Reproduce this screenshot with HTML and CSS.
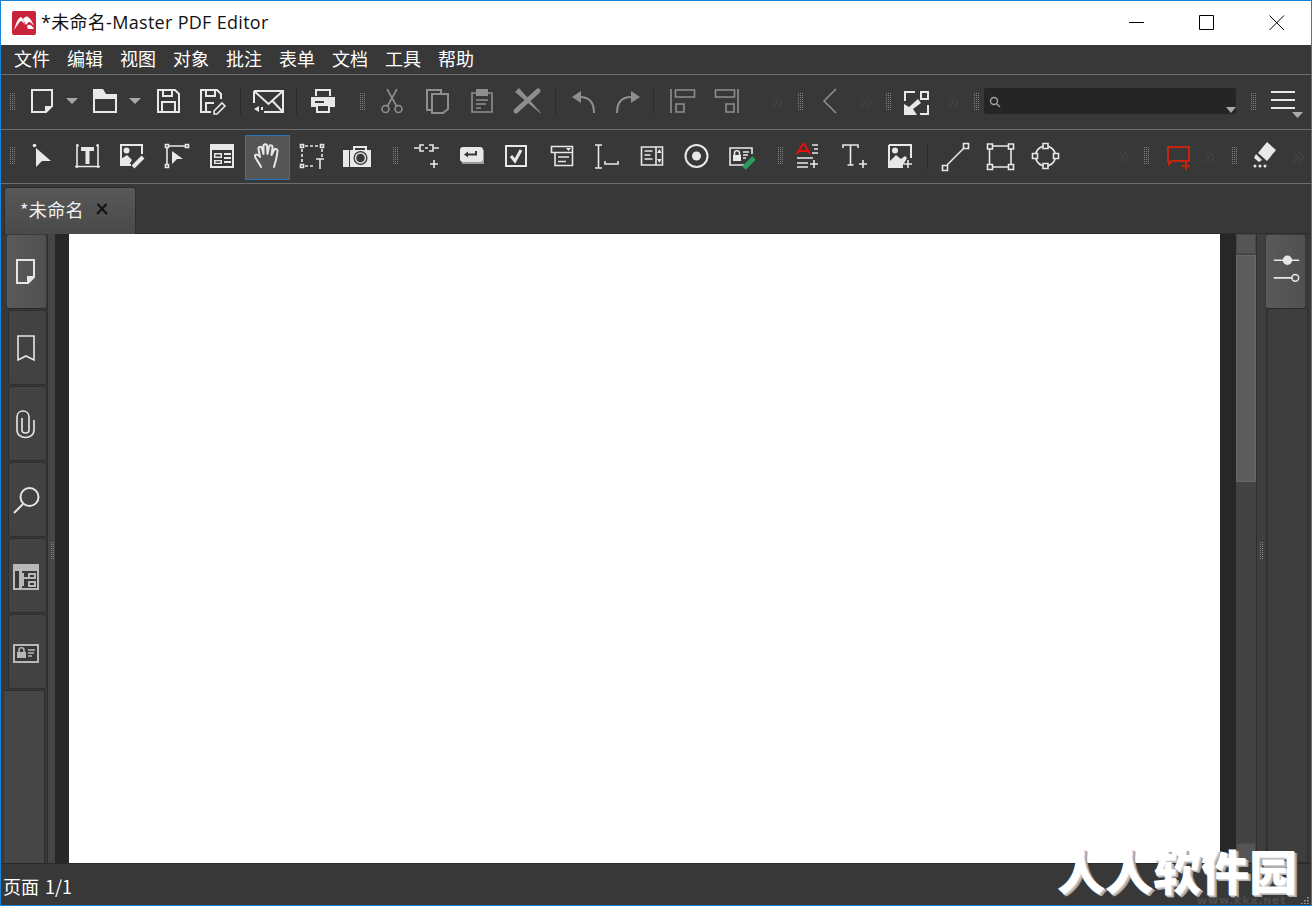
FILE: index.html
```html
<!DOCTYPE html>
<html lang="zh-CN">
<head>
    <meta charset="UTF-8">
    <meta name="viewport" content="width=device-width, initial-scale=1.0">
    <title>*未命名-Master PDF Editor</title>
    <link rel="stylesheet" href="styles.css">
</head>
<body>
<div class="window">

    <div class="titlebar">
        <svg class="logo" viewBox="0 0 24 24">
            <rect width="24" height="24" rx="2" fill="#c9243a"/>
            <path class="logo-mark" d="M2 19C4 12 6 7 9 6c2 1 3 5 4 8-2-3-3-4-4-4-2 1-4 5-7 9zM11 8c2-2 3-3 5-2 2 1 4 4 6 9-2-2-3-4-5-4-1 0-2 2-3 3-1-2-2-4-3-6zM15 15c2-2 4-2 7 3H16z"/>
        </svg>
        <span class="title-text">*未命名-Master PDF Editor</span>
        <div class="winbtns">
            <svg class="winbtn" viewBox="0 0 16 16"><path d="M0 7.500h15"/></svg>
            <svg class="winbtn" viewBox="0 0 16 16"><path d="M.5.5h14v14H.5z"/></svg>
            <svg class="winbtn" viewBox="0 0 16 16"><path d="M.5.5l14.500 14.500M15 .5L.5 15"/></svg>
        </div>
    </div>

    <div class="menu">
        <span>文件</span><span>编辑</span><span>视图</span><span>对象</span><span>批注</span><span>表单</span><span>文档</span><span>工具</span><span>帮助</span>
    </div>

    <div class="toolbar tb1">
        <i class="grip"></i>
        <div class="tool ml5"><svg class="ic" viewBox="0 0 31 31"><path d="M5 4h20v16l-6 6H5z"/><path class="f" d="M25 20h-7v7z"/></svg></div>
        <div class="tool w14"><svg class="caret" viewBox="0 0 14 31"><path d="M1 12h12l-6 6z"/></svg></div>
        <div class="tool w49"><svg class="ic" viewBox="0 0 31 31"><path d="M6 12h22v14H6z"/><path class="f" d="M5 3h10l3 5h11v4H5z"/></svg></div>
        <div class="tool w14"><svg class="caret" viewBox="0 0 14 31"><path d="M1 12h12l-6 6z"/></svg></div>
        <div class="tool ml3"><svg class="ic" viewBox="0 0 31 31"><path d="M6 4h17l4 4v18H6z"/><path d="M11 4v6h9V4M10 26V16h13v10"/></svg></div>
        <div class="tool"><svg class="ic" viewBox="0 0 31 31"><path d="M14 26H4V4h16l4 4v5"/><path d="M9 4v6h9V4M9 26V17h8"/><path class="thin" d="M17 25l8-8 3 3-8 8h-3z"/></svg></div>
        <div class="sep w11"></div>
        <div class="tool"><svg class="ic mail" viewBox="0 0 31 31"><path d="M1 5h29v21H11M1 5v12M1 5l14.500 13L30 5M19.500 15L30 26"/><path class="f" d="M1 23l5-3v6zM8 21h2v3H8z"/></svg></div>
        <div class="sep w11"></div>
        <div class="tool w43"><svg class="ic" viewBox="0 0 31 31"><path d="M8 10V4h14v6"/><path class="f" d="M3 11h24v10H3z"/><path class="hole" d="M7 15h9v2H7z"/><path d="M9 19h12v7H9z" fill="#383838"/></svg></div>
        <i class="grip ml15"></i>
        <div class="tool ml5 off"><svg class="ic thin" viewBox="0 0 31 31"><circle cx="8.500" cy="23" r="3.500"/><circle cx="21.500" cy="23" r="3.500"/><path d="M10.500 20L20 3M19.500 20L10 3"/></svg></div>
        <div class="tool off"><svg class="ic" viewBox="0 0 31 31"><path d="M9 24H5V4h14v4"/><path d="M10 8h16v15l-5 4H10z"/></svg></div>
        <div class="tool off"><svg class="ic thin" viewBox="0 0 31 31"><path d="M5 7h20v19H5z"/><path class="f" d="M9 3h12v7H9z"/><path d="M9 14h12M9 18h10M9 22h5"/></svg></div>
        <div class="tool off"><svg class="ic" viewBox="0 0 31 31"><path class="fat" d="M26 5L4 25"/><path class="f" d="M3 6l4-4 22 25h-1z"/></svg></div>
        <div class="sep w11"></div>
        <div class="tool off"><svg class="ic" viewBox="0 0 31 31"><path class="f" d="M4 11l9-6v12z"/><path d="M12 11c7 0 14 3 14 16"/></svg></div>
        <div class="tool off"><svg class="ic" viewBox="0 0 31 31"><path class="f" d="M27 11l-9-6v12z"/><path d="M4 27c0-13 7-16 14-16"/></svg></div>
        <div class="sep w5"></div>
        <div class="tool ml3 off"><svg class="ic thin" viewBox="0 0 31 31"><path d="M5 3v24"/><path d="M9.500 4h19v7h-19zM10 18h8v8h-8z"/></svg></div>
        <div class="tool off"><svg class="ic thin" viewBox="0 0 31 31"><path d="M27 3v24"/><path d="M4.500 4h19v7h-19zM15 18h8v8h-8z"/></svg></div>
        <div class="tool more ml18"><svg class="ic chev" viewBox="0 0 31 31"><path d="M10.500 11l5 5-5 5M15.500 11l5 5-5 5"/></svg></div>
        <i class="grip ml10"></i>
        <div class="tool w55 off"><svg class="ic thin" viewBox="0 0 31 31"><path d="M21 3L9 15l12 12"/></svg></div>
        <div class="tool w17"><svg class="ic chev" viewBox="0 0 31 31"><path d="M10.500 11l5 5-5 5M15.500 11l5 5-5 5"/></svg></div>
        <i class="grip ml11"></i>
        <div class="tool w51"><svg class="ic" viewBox="0 0 31 31"><path d="M4 15V6h10M19 28h8v-9"/><path d="M20 6h7v7h-7z"/><path class="f" d="M3 29V18l5 3 9-8 3 4-8 6 4 6z"/></svg></div>
        <div class="tool more ml1"><svg class="ic chev" viewBox="0 0 31 31"><path d="M10.500 11l5 5-5 5M15.500 11l5 5-5 5"/></svg></div>
        <i class="grip ml10"></i>
        <div class="search ml5">
            <svg class="search-ic" viewBox="0 0 12 12"><circle cx="5" cy="5" r="3.500"/><path d="M7.500 7.500l3.500 3.500"/></svg>
            <svg class="search-caret" viewBox="0 0 10 6"><path d="M0 0h10L5 6z"/></svg>
        </div>
        <i class="grip ml15"></i>
        <div class="tool w55"><svg class="ic lines" viewBox="0 0 31 31"><path d="M3 6h24M3 14h24M3 22h24"/><path class="f caret-f" d="M24 26h11l-5.500 6z"/></svg></div>
    </div>

    <div class="toolbar tb2">
        <i class="grip"></i>
        <div class="tool ml5"><svg class="ic" viewBox="0 0 31 31"><circle class="f" cx="7.500" cy="4.500" r="1.800"/><path class="f" d="M9 7l15 13h-9l-6 6z"/></svg></div>
        <div class="tool"><svg class="ic" viewBox="0 0 31 31"><path class="thin" d="M5 3v24M26 3v24M3 25.500h25"/><path class="thin" d="M5 4.500h2M24 4.500h2"/><path class="f" d="M9 6h13v4h-4.500v13h-4V10H9z"/></svg></div>
        <div class="tool"><svg class="ic" viewBox="0 0 31 31"><path d="M14 24H4V4h21v9"/><circle class="f" cx="9.500" cy="9.500" r="3"/><path class="f" d="M4 24v-6l6-4 5 5-3 5z"/><path class="fat thinner" d="M16 26l10-10"/></svg></div>
        <div class="tool"><svg class="ic" viewBox="0 0 31 31"><path class="thin" d="M7 5h16M5 7v16"/><path class="thin" d="M3.500 3.500h3v3h-3zM23.500 3.500h3v3h-3zM3.500 23.500h3v3h-3z"/><path class="f" d="M10 10l11 8h-6l-5 5z"/></svg></div>
        <div class="tool"><svg class="ic" viewBox="0 0 31 31"><path class="f" d="M3 3h24v24H3z"/><path class="hole" d="M5 9h20v16H5z"/><path class="f" d="M7 12h8v5H7zM7 19h8v4H7zM17 12h7v2h-7zM17 16h7v2h-7zM17 20h7v2h-7z"/><path class="hole" d="M8.500 13.500h5v2h-5zM8.500 20.200h5v1.600h-5z"/></svg></div>
        <div class="tool hand-active"><svg class="ic round" viewBox="0 0 31 31"><path d="M10 26C8 21 4 18 4 15c0-2 3-2 5 1L7.500 8c-.5-2.500 3-3 3.500-.5L12.500 13V5c0-2.500 3.500-2.500 3.500 0l.5 8L18 6c.5-2.500 4-2 3.500.5L20.500 14 23 9c1-2 4-1 3.500 1.500C26 15 25 20 23 26"/></svg></div>
        <div class="tool"><svg class="ic thin" viewBox="0 0 31 31"><path class="dash" d="M8 5h15M5 8v15M8 25h9M25 8v8"/><path d="M3.500 3.500h3v3h-3zM23.500 3.500h3v3h-3zM3.500 23.500h3v3h-3z"/><path d="M19 18h8M23 18v10"/></svg></div>
        <div class="tool"><svg class="ic" viewBox="0 0 31 31"><path class="f" d="M1 9h6v17H1zM8 9h3V5h14v4h4v17H8z"/><path class="hole" d="M13 7h10v2H13z"/><circle class="hole" cx="18.500" cy="17" r="7"/><circle class="ring" cx="18.500" cy="17" r="5"/></svg></div>
        <i class="grip ml13"></i>
        <div class="tool ml6"><svg class="ic thin" viewBox="0 0 31 31"><path d="M3 7h5M23 7h5M13 4H9v6h4M18 4h4v6h-4M14 7h3M19 23h8M23 19v8"/></svg></div>
        <div class="tool"><svg class="ic" viewBox="0 0 31 31"><path class="shade" d="M6 9h22v14H6z"/><rect class="f" x="4" y="6" width="23" height="15" rx="3"/><path class="dark" d="M20 10v3.500H11"/><path class="hole" d="M8 13.500l4-3v6z"/></svg></div>
        <div class="tool"><svg class="ic" viewBox="0 0 31 31"><path d="M5 5h20v20H5z"/><path class="bold" d="M10 15l4 5 6-11"/></svg></div>
        <div class="tool"><svg class="ic thin" viewBox="0 0 31 31"><path d="M5.500 5.500h21v6h-21zM9 11.500h17.500v13H9zM12 16h11M12 20.500h8"/><path class="f" d="M20 7h5l-2.500 3z"/></svg></div>
        <div class="tool"><svg class="ic thin" viewBox="0 0 31 31"><path d="M4 4h7M7.500 4v23M4 27h7M14 20v3h13v-3"/></svg></div>
        <div class="tool"><svg class="ic thin" viewBox="0 0 31 31"><path d="M5.500 6h21v18h-21zM20 6v18M8.500 10h8M8.500 14h6M8.500 18h8"/><path class="f" d="M21 12l2.500-4 2 4zM21 18l2.500 4 2-4z"/></svg></div>
        <div class="tool"><svg class="ic" viewBox="0 0 31 31"><circle cx="15.500" cy="15" r="11"/><circle class="f" cx="15.500" cy="15" r="4.500"/></svg></div>
        <div class="tool"><svg class="ic thin" viewBox="0 0 31 31"><path d="M19 24H4V7h22v6"/><path class="f" d="M7 14h8v6H7z"/><path d="M8.500 14v-2c0-3 5-3 5 0v2M17 11h6M17 14h5M17 17h3"/><path class="pen" d="M18 27l10-10"/></svg></div>
        <i class="grip ml14"></i>
        <div class="tool ml3"><svg class="ic thin" viewBox="0 0 31 31"><path class="red" d="M4 13L10 3h1l6 10M6.500 10h8"/><path d="M19 4h6M21 8h4M19 12h6M4 17h16M4 22h11M4 26h11M17 23h8M21 19v8"/></svg></div>
        <div class="tool"><svg class="ic thin" viewBox="0 0 31 31"><path d="M5 7V4h15v3M12.500 4v20M9.500 24h6M21 23h8M25 19v8"/></svg></div>
        <div class="tool"><svg class="ic" viewBox="0 0 31 31"><path d="M6 4h22v13M6 4v22h14"/><circle class="f" cx="12" cy="9.500" r="3"/><path class="f" d="M6 26v-5l7-7 5 4 4-3 2 2-5 9z"/><path class="thin" d="M21 23h8M25 19v8"/></svg></div>
        <div class="sep w11 ml1"></div>
        <div class="tool"><svg class="ic thin" viewBox="0 0 31 31"><path d="M7 24L24 7"/><path d="M2.500 24.500h5v5h-5zM23.500 2.500h5v5h-5z"/></svg></div>
        <div class="tool"><svg class="ic thin" viewBox="0 0 31 31"><path d="M7 5h17M7 26h17M4.500 7.500v16M26 7.500v16"/><path d="M2.500 3h5v5h-5zM23.500 3h5v5h-5zM2.500 23.500h5v5h-5zM23.500 23.500h5v5h-5z"/></svg></div>
        <div class="tool"><svg class="ic thin" viewBox="0 0 31 31"><circle cx="15.500" cy="15" r="10"/><path class="box" d="M13 2.500h5v5h-5zM13 22.500h5v5h-5zM2.500 12.500h5v5h-5zM23.500 12.500h5v5h-5z"/></svg></div>
        <div class="tool more ml45"><svg class="ic chev" viewBox="0 0 31 31"><path d="M10.500 11l5 5-5 5M15.500 11l5 5-5 5"/></svg></div>
        <i class="grip ml10"></i>
        <div class="tool w57"><svg class="ic red-ic" viewBox="0 0 31 31"><path d="M6 6h21v14H10l-3 3v-3H6z"/><path d="M20 25h8M24 21v8"/></svg></div>
        <div class="tool w7"><svg class="ic chev" viewBox="0 0 31 31"><path d="M10.500 11l5 5-5 5M15.500 11l5 5-5 5"/></svg></div>
        <i class="grip ml19"></i>
        <div class="tool w51"><svg class="ic" viewBox="0 0 31 31"><path class="f" d="M20 1l9 8-9 11-9-8z"/><path class="f" d="M9 13l6 6-3 2-5-4z"/><circle class="f" cx="8" cy="25" r="1.500"/><circle class="f" cx="13" cy="25" r="1.500"/><circle class="f" cx="18" cy="25" r="1.500"/></svg></div>
        <div class="tool more"><svg class="ic chev" viewBox="0 0 31 31"><path d="M10.500 11l5 5-5 5M15.500 11l5 5-5 5"/></svg></div>
    </div>

    <div class="tabrow">
        <div class="doc-tab">
            <span>*未命名</span>
            <svg class="doc-close" viewBox="0 0 12 12"><path d="M1.500 1L11 11M10.500 1L1 11"/></svg>
        </div>
    </div>

    <div class="main">
        <div class="side">
            <div class="side-tab active"><svg class="ic" viewBox="0 0 31 31"><path d="M6 4h17v17l-6 6H6z"/><path class="f" d="M23 20h-7v8z"/></svg></div>
            <div class="side-tab"><svg class="ic thin" viewBox="0 0 31 31"><path d="M7 4h16v24l-8-4-8 4z"/></svg></div>
            <div class="side-tab"><svg class="ic thin" viewBox="0 0 31 31"><path d="M23 12v10c0 10-17 10-17 0V9c0-8 12-8 12 0v13c0 4-7 4-7 0V10"/></svg></div>
            <div class="side-tab"><svg class="ic" viewBox="0 0 31 31"><circle cx="18.500" cy="13" r="9"/><path d="M12 20L3 29"/></svg></div>
            <div class="side-tab"><svg class="ic tree" viewBox="0 0 31 31"><path class="f" d="M2 2h26v26H2z"/><path class="hole" d="M4 9h4v17H4zM11 9h15v17H11z"/><path class="f" d="M9 11h4v13H9zM13 15h5v2h-5z"/><path class="f" d="M17 11h8v6h-8zM17 19h8v6h-8z"/><path class="hole" d="M19 13h4v2h-4zM19 21h4v2h-4z"/></svg></div>
            <div class="side-tab"><svg class="ic tree" viewBox="0 0 31 31"><path class="f" d="M2 6h26v19H2z"/><path class="hole" d="M4 8h22v15H4z"/><path class="f" d="M6 14h9v6H6z"/><path class="thin" d="M8 14v-2c0-3 5-3 5 0v2M17 12h7M17 15h6M17 18h4"/></svg></div>
            <div class="side-rest"></div>
        </div>
        <div class="splitter"><i class="split-grip"></i></div>
        <div class="canvas"><div class="page"></div></div>
        <div class="scroll">
            <div class="scroll-btn"></div>
            <div class="scroll-thumb"></div>
            <div class="scroll-track"></div>
            <div class="scroll-btn"></div>
        </div>
        <div class="splitter right"><i class="split-grip"></i></div>
        <div class="rside">
            <div class="side-tab active"><svg class="sliders" viewBox="0 0 40 74"><path d="M8 25h26M8 43h19"/><circle class="dot" cx="22" cy="25" r="4"/><circle cx="30" cy="43" r="3.500"/></svg></div>
            <div class="rside-rest"></div>
        </div>
    </div>

    <div class="status">页面 1/1</div>
    <div class="watermark">人人软件园</div>
    <div class="watermark-url">www.kkx.net</div>
    <i class="size-grip"></i>
</div>
</body>
</html>
```

FILE: styles.css
```css
* {
    box-sizing: border-box;
}

body {
    margin: 0;
    font-family: "Noto Sans CJK SC", sans-serif;
    color: #fff;
}

.window {
    position: relative;
    width: 1312px;
    height: 906px;
    border: 1px solid #1883d7;
    background-color: #383838;
    display: flex;
    flex-direction: column;
    overflow: hidden;
}

/* title bar */
.titlebar {
    height: 44px;
    background-color: #fff;
    display: flex;
    align-items: center;
    padding-left: 11px;
    flex-shrink: 0;
}

.logo {
    width: 24px;
    height: 24px;
}

.logo-mark {
    fill: #fff;
}

.title-text {
    margin-left: 5px;
    padding-bottom: 4px;
    font-family: "Open Sans", "Noto Sans CJK SC", sans-serif;
    font-size: 18px;
    letter-spacing: 0.3px;
    color: #111;
    white-space: nowrap;
}

.winbtns {
    margin-left: auto;
    display: flex;
    padding-right: 26px;
    gap: 54px;
}

.winbtn {
    width: 16px;
    height: 16px;
    fill: none;
    stroke: #000;
    stroke-width: 1;
}

/* menu */
.menu {
    height: 29px;
    display: flex;
    gap: 17px;
    padding-left: 13px;
    padding-bottom: 4px;
    align-items: center;
    font-size: 18px;
    flex-shrink: 0;
}

/* toolbars */
.toolbar {
    display: flex;
    align-items: flex-start;
    padding-left: 9px;
    padding-top: 11px;
    border-top: 1px solid #6e6e6e;
    flex-shrink: 0;
}

.tb1 {
    height: 55px;
}

.tb2 {
    height: 54px;
}

.grip {
    display: block;
    width: 5px;
    height: 17px;
    margin-top: 7px;
    flex-shrink: 0;
    background: conic-gradient(#808080 25%, transparent 0) -1px 0 / 2px 2px;
}

.tb2 .grip {
    margin-top: 6px;
}

.tool {
    width: 45px;
    height: 31px;
    flex-shrink: 0;
    display: flex;
    justify-content: center;
    color: #e8e8e8;
}

.tool.off {
    color: #8e8e8e;
}

.more {
    width: 21px;
}

.sep {
    height: 27px;
    margin-top: 2px;
    flex-shrink: 0;
}

.sep::after {
    content: "";
    display: block;
    width: 1px;
    height: 100%;
    margin: 0 auto;
    background-color: #2c2c2c;
}

.hand-active {
    position: relative;
}

.hand-active::before {
    content: "";
    position: absolute;
    left: 0;
    top: -6px;
    width: 43px;
    height: 43px;
    background-color: #555;
    border: 1px solid #2a75b8;
}

.hand-active svg {
    position: relative;
    left: -1px;
}

.w5 { width: 5px; }
.w7 { width: 7px; }
.w11 { width: 11px; }
.w14 { width: 14px; }
.w17 { width: 17px; }
.w43 { width: 43px; }
.w49 { width: 49px; }
.w51 { width: 51px; }
.w55 { width: 55px; }
.w57 { width: 57px; }

.ml1 { margin-left: 1px; }
.ml3 { margin-left: 3px; }
.ml5 { margin-left: 5px; }
.ml6 { margin-left: 6px; }
.ml10 { margin-left: 10px; }
.ml11 { margin-left: 11px; }
.ml13 { margin-left: 13px; }
.ml14 { margin-left: 14px; }
.ml15 { margin-left: 15px; }
.ml18 { margin-left: 18px; }
.ml19 { margin-left: 19px; }
.ml45 { margin-left: 45px; }

/* icons */
.ic {
    width: 31px;
    height: 31px;
    flex-shrink: 0;
    fill: none;
    stroke: currentColor;
    stroke-width: 2;
    overflow: visible;
}

.ic .f {
    fill: currentColor;
    stroke: none;
}

.ic .hole {
    fill: #383838;
    stroke: none;
}

.ic.thin,
.ic .thin {
    stroke-width: 1.6;
}

.ic .fat {
    stroke-width: 5;
    stroke-linecap: round;
}

.ic .thinner {
    stroke-width: 4;
    stroke-linecap: butt;
}

.ic .bold {
    stroke-width: 3;
}

.ic .dash {
    stroke-dasharray: 3 2;
}

.ic .dark {
    stroke: #383838;
}

.ic .shade {
    fill: #999;
    stroke: none;
}

.ic .ring {
    fill: none;
    stroke: #ddd;
    stroke-width: 1.5;
}

.ic .red {
    stroke: #e8100c;
    stroke-width: 2;
}

.ic .pen {
    stroke: #2a9d5c;
    stroke-width: 5;
}

.ic .box {
    fill: #383838;
}

.ic .caret-f {
    fill: #aaa;
}

.ic.round {
    stroke-linejoin: round;
    stroke-linecap: round;
}

.ic.chev {
    color: #424242;
    stroke-width: 1.5;
}

.ic.lines {
    stroke-width: 1.8;
}

.ic.red-ic {
    color: #c4240e;
}

.ic.tree {
    color: #b8b8b8;
    margin-top: 3px;
}

.caret {
    width: 14px;
    height: 31px;
    fill: #a8a8a8;
}

/* search */
.search {
    position: relative;
    width: 252px;
    height: 26px;
    margin-top: 2px;
    background-color: #252525;
    border-radius: 3px;
    flex-shrink: 0;
}

.search-ic {
    position: absolute;
    left: 5px;
    top: 8px;
    width: 12px;
    height: 12px;
    fill: none;
    stroke: #a0a0a0;
    stroke-width: 1.4;
}

.search-caret {
    position: absolute;
    right: 0;
    bottom: 1px;
    width: 10px;
    height: 6px;
    fill: #a8a8a8;
}

/* document tab */
.tabrow {
    height: 51px;
    border-top: 1px solid #6e6e6e;
    border-bottom: 1px solid #2e2e2e;
    padding: 3px 0 0 3px;
    flex-shrink: 0;
}

.doc-tab {
    width: 132px;
    height: 47px;
    background: linear-gradient(#585858, #4a4a4a);
    border: 1px solid #2e2e2e;
    border-bottom: none;
    border-radius: 3px 3px 0 0;
    padding-left: 15px;
    padding-bottom: 5px;
    display: flex;
    align-items: center;
    font-size: 18px;
    color: #f0f0f0;
    letter-spacing: 0.4px;
}

.doc-close {
    width: 12px;
    height: 12px;
    margin-left: 12px;
    fill: none;
    stroke: #141414;
    stroke-width: 2.4;
}

/* main area */
.main {
    flex: 1;
    display: flex;
    min-height: 0;
}

.side {
    width: 46px;
    padding-left: 3px;
    display: flex;
    flex-direction: column;
    flex-shrink: 0;
}

.side-tab {
    width: 39px;
    height: 75px;
    margin: 0 0 1px 4px;
    padding-right: 2px;
    display: flex;
    align-items: center;
    justify-content: center;
    flex-shrink: 0;
    background-color: #424242;
    border: 1px solid #2e2e2e;
    border-radius: 3px;
    color: #e6e6e6;
}

.side-tab.active {
    width: 41px;
    margin-left: 2px;
    padding-right: 0;
    background: linear-gradient(to right, #5a5a5a, #505050);
    border-color: #3a3a3a;
    border-bottom-color: #2a2a2a;
}

.side-rest {
    flex: 1;
    width: 41px;
    background-color: #464646;
    border-right: 1px solid #2e2e2e;
    border-top: 1px solid #2e2e2e;
}

.splitter {
    position: relative;
    width: 8px;
    background-color: #464646;
    border-left: 1px solid #2e2e2e;
    flex-shrink: 0;
}

.splitter.right {
    width: 9px;
    background-color: #3f3f3f;
}

.split-grip {
    position: absolute;
    left: 3px;
    top: 308px;
    width: 3px;
    height: 17px;
    background: conic-gradient(#858585 25%, transparent 0) -1px 0 / 2px 2px;
}

.canvas {
    flex: 1;
    background-color: #272727;
    padding: 0 16px 0 14px;
}

.page {
    height: 100%;
    background-color: #fff;
}

.scroll {
    width: 20px;
    display: flex;
    flex-direction: column;
    flex-shrink: 0;
    background-color: #434343;
}

.scroll-btn {
    height: 20px;
    background-color: #555;
    border: 1px solid #484848;
}

.scroll-thumb {
    height: 227px;
    margin-top: 1px;
    background-color: #5c5c5c;
    border: 1px solid #676767;
}

.scroll-track {
    flex: 1;
}

.rside {
    width: 46px;
    display: flex;
    flex-direction: column;
    flex-shrink: 0;
}

.rside .side-tab {
    margin: 0;
    width: 41px;
}

.rside-rest {
    flex: 1;
    width: 41px;
    margin-left: 2px;
    border-left: 1px solid #2e2e2e;
    border-right: 1px solid #2e2e2e;
    border-bottom: 1px solid #2e2e2e;
    background-color: #3e3e3e;
}

.sliders {
    width: 40px;
    height: 74px;
    fill: none;
    stroke: #e6e6e6;
    stroke-width: 1.6;
}

.sliders .dot {
    fill: #e6e6e6;
}

/* status bar */
.status {
    height: 42px;
    padding-left: 2px;
    padding-top: 2px;
    display: flex;
    align-items: center;
    font-size: 18px;
    word-spacing: 2px;
    flex-shrink: 0;
    border-top: 1px solid #2a2a2a;
}

/* watermark over the window */
.watermark {
    position: absolute;
    left: 1056px;
    top: 844px;
    font-size: 48px;
    font-weight: 900;
    line-height: 48px;
    color: #fff;
    text-shadow: 1px 1px 0 #d0d0d0, 2px 2px 0 #b0b0b0, 3px 2px 0 #999;
    white-space: nowrap;
}

.watermark-url {
    position: absolute;
    left: 1196px;
    top: 895px;
    font-family: "DejaVu Sans", sans-serif;
    font-size: 11px;
    line-height: 10px;
    font-weight: 700;
    letter-spacing: 0.8px;
    color: #4c4c4c;
    white-space: nowrap;
}

.size-grip {
    position: absolute;
    right: 1px;
    bottom: 1px;
    width: 10px;
    height: 10px;
    background: conic-gradient(#8a8a8a 25%, transparent 0) 0 0 / 3px 3px;
    clip-path: polygon(100% 0, 100% 100%, 0 100%);
}
```
